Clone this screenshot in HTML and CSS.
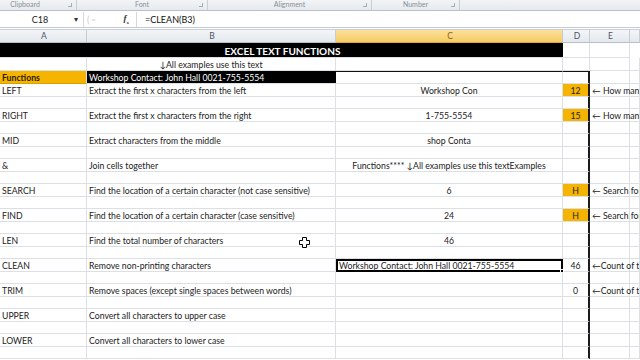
FILE: index.html
```html
<!DOCTYPE html>
<html>
<head>
<meta charset="utf-8">
<link rel="stylesheet" href="styles.css">
</head>
<body>
<div class="app">
  <div class="ribbon">
    <div class="grp g1"><span>Clipboard</span><i class="launch"></i></div>
    <div class="grp g2"><span>Font</span><i class="launch"></i></div>
    <div class="grp g3"><span>Alignment</span><i class="launch"></i></div>
    <div class="grp g4"><span>Number</span><i class="launch"></i></div>
    <div class="grp rest"></div>
  </div>
  <div class="fbar">
    <div class="namebox"><span class="ref">C18</span><span class="drop">▾</span></div>
    <div class="fbtns"><span class="paren">(</span><span class="eq">=</span><span class="fx">f<sub>x</sub></span></div>
    <div class="formula">=CLEAN(B3)</div>
  </div>
  <div class="sheet">
    <div class="row hdr">
      <div class="c">A</div><div class="c">B</div><div class="c sel">C</div><div class="c">D</div><div class="c">E</div><div class="c"></div>
    </div>
    <div class="row r15">
      <div class="c title">EXCEL TEXT FUNCTIONS</div><div class="c"></div><div class="c"></div>
    </div>
    <div class="row">
      <div class="c"></div><div class="c ctr">↓All examples use this text</div><div class="c"></div><div class="c"></div><div class="c"></div><div class="c"></div>
    </div>
    <div class="row">
      <div class="c fn">Functions</div><div class="c blk">Workshop Contact: John Hall 0021-755-5554</div><div class="c boxtop"></div><div class="c boxtop boxr"></div><div class="c"></div><div class="c"></div>
    </div>

    <div class="row">
      <div class="c">LEFT</div><div class="c">Extract the first x characters from the left</div><div class="c ctr">Workshop Con</div><div class="c ctr org boxr">12</div><div class="c over">← How many</div><div class="c"></div>
    </div>
    <div class="row s"><div class="c"></div><div class="c"></div><div class="c"></div><div class="c boxr"></div><div class="c"></div><div class="c"></div></div>

    <div class="row">
      <div class="c">RIGHT</div><div class="c">Extract the first x characters from the right</div><div class="c ctr">1-755-5554</div><div class="c ctr org boxr">15</div><div class="c over">← How many</div><div class="c"></div>
    </div>
    <div class="row s"><div class="c"></div><div class="c"></div><div class="c"></div><div class="c boxr"></div><div class="c"></div><div class="c"></div></div>

    <div class="row">
      <div class="c">MID</div><div class="c">Extract characters from the middle</div><div class="c ctr">shop Conta</div><div class="c boxr"></div><div class="c"></div><div class="c"></div>
    </div>
    <div class="row s"><div class="c"></div><div class="c"></div><div class="c"></div><div class="c boxr"></div><div class="c"></div><div class="c"></div></div>

    <div class="row">
      <div class="c">&amp;</div><div class="c">Join cells together</div><div class="c ctr">Functions**** ↓All examples use this textExamples</div><div class="c boxr"></div><div class="c"></div><div class="c"></div>
    </div>
    <div class="row s"><div class="c"></div><div class="c"></div><div class="c"></div><div class="c boxr"></div><div class="c"></div><div class="c"></div></div>

    <div class="row">
      <div class="c">SEARCH</div><div class="c">Find the location of a certain character (not case sensitive)</div><div class="c ctr">6</div><div class="c ctr org boxr">H</div><div class="c over">← Search for</div><div class="c"></div>
    </div>
    <div class="row s"><div class="c"></div><div class="c"></div><div class="c"></div><div class="c boxr"></div><div class="c"></div><div class="c"></div></div>

    <div class="row">
      <div class="c">FIND</div><div class="c">Find the location of a certain character (case sensitive)</div><div class="c ctr">24</div><div class="c ctr org boxr">H</div><div class="c over">← Search for</div><div class="c"></div>
    </div>
    <div class="row s"><div class="c"></div><div class="c"></div><div class="c"></div><div class="c boxr"></div><div class="c"></div><div class="c"></div></div>

    <div class="row">
      <div class="c">LEN</div><div class="c">Find the total number of characters</div><div class="c ctr">46</div><div class="c boxr"></div><div class="c"></div><div class="c"></div>
    </div>
    <div class="row s"><div class="c"></div><div class="c"></div><div class="c"></div><div class="c boxr"></div><div class="c"></div><div class="c"></div></div>

    <div class="row">
      <div class="c">CLEAN</div><div class="c">Remove non-printing characters</div><div class="c active">Workshop Contact: John Hall 0021-755-5554<i class="handle"></i></div><div class="c ctr boxr">46</div><div class="c over">←Count of th</div><div class="c"></div>
    </div>
    <div class="row s"><div class="c"></div><div class="c"></div><div class="c"></div><div class="c boxr"></div><div class="c"></div><div class="c"></div></div>

    <div class="row">
      <div class="c">TRIM</div><div class="c">Remove spaces (except single spaces between words)</div><div class="c"></div><div class="c ctr boxr">0</div><div class="c over">←Count of th</div><div class="c"></div>
    </div>
    <div class="row s"><div class="c"></div><div class="c"></div><div class="c"></div><div class="c boxr"></div><div class="c"></div><div class="c"></div></div>

    <div class="row">
      <div class="c">UPPER</div><div class="c">Convert all characters to upper case</div><div class="c"></div><div class="c boxr"></div><div class="c"></div><div class="c"></div>
    </div>
    <div class="row s"><div class="c"></div><div class="c"></div><div class="c"></div><div class="c boxr"></div><div class="c"></div><div class="c"></div></div>

    <div class="row">
      <div class="c">LOWER</div><div class="c">Convert all characters to lower case</div><div class="c"></div><div class="c boxr"></div><div class="c"></div><div class="c"></div>
    </div>
    <div class="row s"><div class="c"></div><div class="c"></div><div class="c"></div><div class="c boxr"></div><div class="c"></div><div class="c"></div></div>

    <svg class="cursor" width="11" height="11" viewBox="0 0 11 11"><path d="M3.5 0.5h4v3h3v4h-3v3h-4v-3h-3v-4h3z" fill="#fff" stroke="#000" stroke-width="1"/></svg>
  </div>
</div>
</body>
</html>
```

FILE: styles.css
```css
* { box-sizing: border-box; margin: 0; padding: 0; }
html, body { width: 640px; height: 360px; overflow: hidden; background: #fff; }
body { font-family: Lato, "Open Sans", "Liberation Sans", sans-serif; font-size: 8.7px; color: #222; }
.app { width: 640px; height: 360px; display: flex; flex-direction: column; }

.ribbon { height: 11px; display: flex; background: linear-gradient(#f2f4f7, #e6e9ee); border-bottom: 1px solid #b9c0c8; }
.grp { position: relative; display: flex; align-items: flex-end; justify-content: center; border-right: 1px solid #c9ced5; color: #8a8f96; font-size: 7px; line-height: 10px; }
.grp span { transform: translateY(-1px); }
.g1 { width: 77px; padding-right: 26px; }
.g2 { width: 131px; }
.g3 { width: 164px; }
.g4 { width: 88px; }
.rest { flex: 1; border-right: 0; }
.launch { position: absolute; right: 4px; bottom: 3px; width: 4px; height: 4px; border-right: 1px solid #a8adb4; border-bottom: 1px solid #a8adb4; }

.fbar { height: 17px; display: flex; align-items: center; background: #fff; border-bottom: 1px solid #c6ccd3; }
.namebox { width: 84px; height: 15px; display: flex; align-items: center; border-right: 1px solid #d5d9de; font-size: 9px; }
.ref { flex: 1; text-align: center; padding-left: 6px; }
.drop { width: 9px; font-size: 8px; color: #333; }
.fbtns { width: 53px; height: 15px; display: flex; align-items: center; border-right: 1px solid #d5d9de; color: #c8ccd2; }
.paren { margin-left: 3px; font-size: 9px; }
.eq { margin-left: 2px; font-size: 7px; flex: 1; }
.fx { font-family: "Liberation Serif", serif; font-style: italic; font-weight: bold; color: #333; font-size: 9px; margin-right: 7px; }
.fx sub { font-size: 5px; font-style: italic; }
.formula { padding-left: 8px; font-size: 9px; color: #111; }

.sheet { position: relative; flex: 1; margin-top: 1px; border-top: 1px solid #c9cfd6; }
.row { display: grid; grid-template-columns: 87px 249px 227px 27px 40px 10px; height: 13px; }
.row.s { height: 12px; }
.row.r15 { height: 15px; grid-template-columns: 563px 27px 40px 10px; }
.c { border-right: 1px solid #dcdfe3; border-bottom: 1px solid #dcdfe3; padding-left: 2px; padding-top: 1px; white-space: nowrap; overflow: hidden; line-height: 11px; }
.row.s .c { line-height: 11px; padding-top: 0; }
.ctr { text-align: center; padding-left: 0; }

.hdr { height: 13px; background: linear-gradient(#f3f5f8, #e3e7ec); }
.hdr .c { text-align: center; color: #4a5563; border-right: 1px solid #c5ccd4; border-bottom: 1px solid #b7bec7; font-size: 8.5px; line-height: 12px; padding-top: 0; }
.hdr .c.sel { background: linear-gradient(#fbe09a, #f6cd66); color: #8b5f16; border-bottom: 1px solid #e4a83a; }

.title { background: #000; color: #fff; font-weight: bold; text-align: center; font-size: 10px; line-height: 14px; border-right: 0; }
.fn { background: #f5b400; font-weight: bold; color: #2a1a00; border-bottom: 1px solid #d6a000; }
.blk { background: #000; color: #fff; border-right: 0; }
.boxtop { border-top: 1px solid #111; padding-top: 0; }
.boxr { border-right: 2px solid #1a1a1a; }
.org { background: #f5b400; }
.over { overflow: visible; }
.active { position: relative; border: 2px solid #000; line-height: 9px; padding-left: 1px; padding-top: 0; overflow: visible; }
.handle { position: absolute; right: -3px; bottom: -3px; width: 4px; height: 4px; background: #000; border: 1px solid #fff; }

.cursor { position: absolute; left: 299px; top: 207px; }
```
